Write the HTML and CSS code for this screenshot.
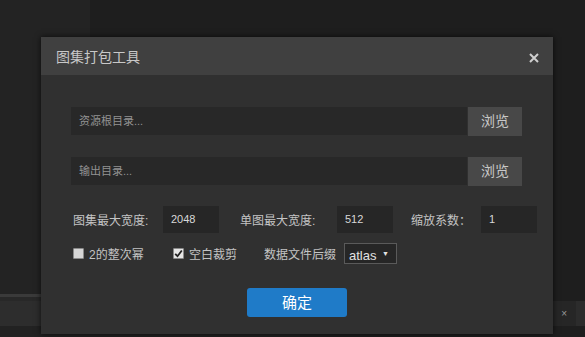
FILE: index.html
```html
<!DOCTYPE html>
<html lang="zh-CN">
<head>
    <meta charset="UTF-8">
    <meta name="viewport" content="width=device-width, initial-scale=1.0">
    <title>图集打包工具</title>
    <link rel="stylesheet" href="styles.css">
</head>
<body>
    <div class="workspace">
        <div class="top-area">
            <div class="sidebar"></div>
            <div class="main"></div>
        </div>
        <div class="bottom-area">
            <div class="panel-left">
                <div class="panel-line"></div>
                <div class="panel-gap"></div>
                <div class="panel-tabs"></div>
            </div>
            <div class="panel-right">
                <div class="panel-gap"></div>
                <div class="panel-tabs dark">
                    <span class="panel-icon">&#9776;</span>
                    <span class="panel-icon">&#215;</span>
                    <span class="panel-block"></span>
                </div>
            </div>
        </div>
    </div>

    <div class="dialog">
        <div class="dialog-title">
            <span>图集打包工具</span>
            <svg class="close-btn" width="10" height="10" viewBox="0 0 10 10">
                <path d="M1 1 L9 9 M9 1 L1 9" stroke="#cfcfcf" stroke-width="2"/>
            </svg>
        </div>
        <div class="dialog-body">
            <div class="path-row">
                <div class="path-input">资源根目录...</div>
                <div class="browse-btn">浏览</div>
            </div>
            <div class="path-row">
                <div class="path-input">输出目录...</div>
                <div class="browse-btn">浏览</div>
            </div>
            <div class="size-row">
                <span class="label label-atlas">图集最大宽度:</span>
                <span class="num-input">2048</span>
                <span class="label label-single">单图最大宽度:</span>
                <span class="num-input">512</span>
                <span class="label label-scale">缩放系数：</span>
                <span class="num-input">1</span>
            </div>
            <div class="option-row">
                <span class="checkbox"></span>
                <span class="label opt-pow">2的整次幂</span>
                <span class="checkbox checked">
                    <svg width="9" height="9" viewBox="0 0 9 9">
                        <path d="M1.2 4.8 L3.5 7.2 L7.8 1.5" stroke="#222" stroke-width="1.8" fill="none"/>
                    </svg>
                </span>
                <span class="label opt-trim">空白裁剪</span>
                <span class="label">数据文件后缀</span>
                <span class="select">atlas <span class="arrow">&#9660;</span></span>
            </div>
            <div class="footer">
                <div class="ok-btn">确定</div>
            </div>
        </div>
    </div>
</body>
</html>
```

FILE: styles.css
```css
* {
    margin: 0;
    padding: 0;
    box-sizing: border-box;
    font-family: "Liberation Sans", "Noto Sans CJK SC", sans-serif;
}

body {
    width: 585px;
    height: 337px;
    overflow: hidden;
    background: #1e1e1e;
}

.workspace {
    display: flex;
    flex-direction: column;
    height: 337px;
}

.top-area {
    display: flex;
    height: 294px;
}

.sidebar {
    width: 90px;
    background: #232323;
}

.main {
    flex: 1;
    background: #1e1e1e;
}

.bottom-area {
    display: flex;
    flex: 1;
}

.panel-left {
    width: 300px;
    background: #222;
}

.panel-right {
    flex: 1;
}

.panel-line {
    height: 3px;
    background: #3a3a3a;
}

.panel-gap {
    height: 4px;
    background: #282828;
}

.panel-right .panel-gap {
    height: 7px;
    background: #1e1e1e;
}

.panel-tabs {
    height: 25px;
    background: #2d2d2d;
}

.panel-tabs.dark {
    display: flex;
    align-items: center;
    justify-content: flex-end;
    gap: 9px;
    background: #262626;
}

.panel-icon {
    color: #9a9a9a;
    font-size: 10px;
}

.panel-block {
    width: 9px;
    height: 25px;
    background: #2c2c2c;
}

.dialog {
    position: absolute;
    left: 41px;
    top: 37px;
    width: 512px;
    height: 297px;
    background: #303030;
    box-shadow: 0 0 6px rgba(0, 0, 0, 0.7);
    display: flex;
    flex-direction: column;
}

.dialog-title {
    height: 38px;
    background: #404040;
    display: flex;
    align-items: center;
    justify-content: space-between;
    padding: 0 14px 0 15px;
    color: #c8c8c8;
    font-size: 14px;
}

.close-btn {
    margin-top: 3px;
}

.dialog-body {
    flex: 1;
    display: flex;
    flex-direction: column;
    padding: 32px 0 17px 30px;
}

.path-row {
    display: flex;
    width: 451px;
    height: 29px;
    margin-bottom: 21px;
}

.path-input {
    flex: 1;
    height: 28px;
    background: #282828;
    color: #929292;
    font-size: 11px;
    line-height: 28px;
    padding-left: 8px;
}

.browse-btn {
    width: 54px;
    margin-left: 1px;
    background: #484848;
    color: #c8c8c8;
    font-size: 14px;
    line-height: 29px;
    text-align: center;
}

.size-row {
    display: flex;
    align-items: center;
    height: 27px;
    margin-top: -1px;
}

.label {
    color: #c4c4c4;
    font-size: 12px;
}

.label-atlas {
    width: 90px;
    margin-left: 2px;
}

.label-single {
    width: 97px;
    margin-left: 21px;
}

.label-scale {
    width: 70px;
    margin-left: 18px;
}

.num-input {
    width: 56px;
    height: 27px;
    background: #262626;
    color: #d8d8d8;
    font-size: 11px;
    line-height: 27px;
    padding-left: 8px;
}

.option-row {
    display: flex;
    align-items: center;
    height: 21px;
    margin-top: 10px;
}

.checkbox {
    width: 11px;
    height: 11px;
    margin-left: 2px;
    margin-right: 5px;
    background: #d6d6d6;
    border: 1px solid #8a8a8a;
    border-radius: 1px;
    display: flex;
    align-items: center;
    justify-content: center;
}

.checkbox.checked {
    background: #e6e6e6;
}

.opt-pow {
    width: 82px;
}

.opt-trim {
    width: 75px;
}

.select {
    margin-left: 8px;
    width: 53px;
    height: 21px;
    border: 1px solid #5a5a5a;
    background: #262626;
    color: #e2e2e2;
    font-size: 13px;
    line-height: 19px;
    padding-left: 4px;
}

.arrow {
    font-size: 7px;
    vertical-align: 4px;
    margin-left: 2px;
}

.footer {
    display: flex;
    justify-content: center;
    margin-top: 24px;
    padding-right: 30px;
}

.ok-btn {
    width: 100px;
    height: 29px;
    background: #1f7bc8;
    border-radius: 3px;
    color: #fff;
    font-size: 15px;
    line-height: 29px;
    text-align: center;
}
```
